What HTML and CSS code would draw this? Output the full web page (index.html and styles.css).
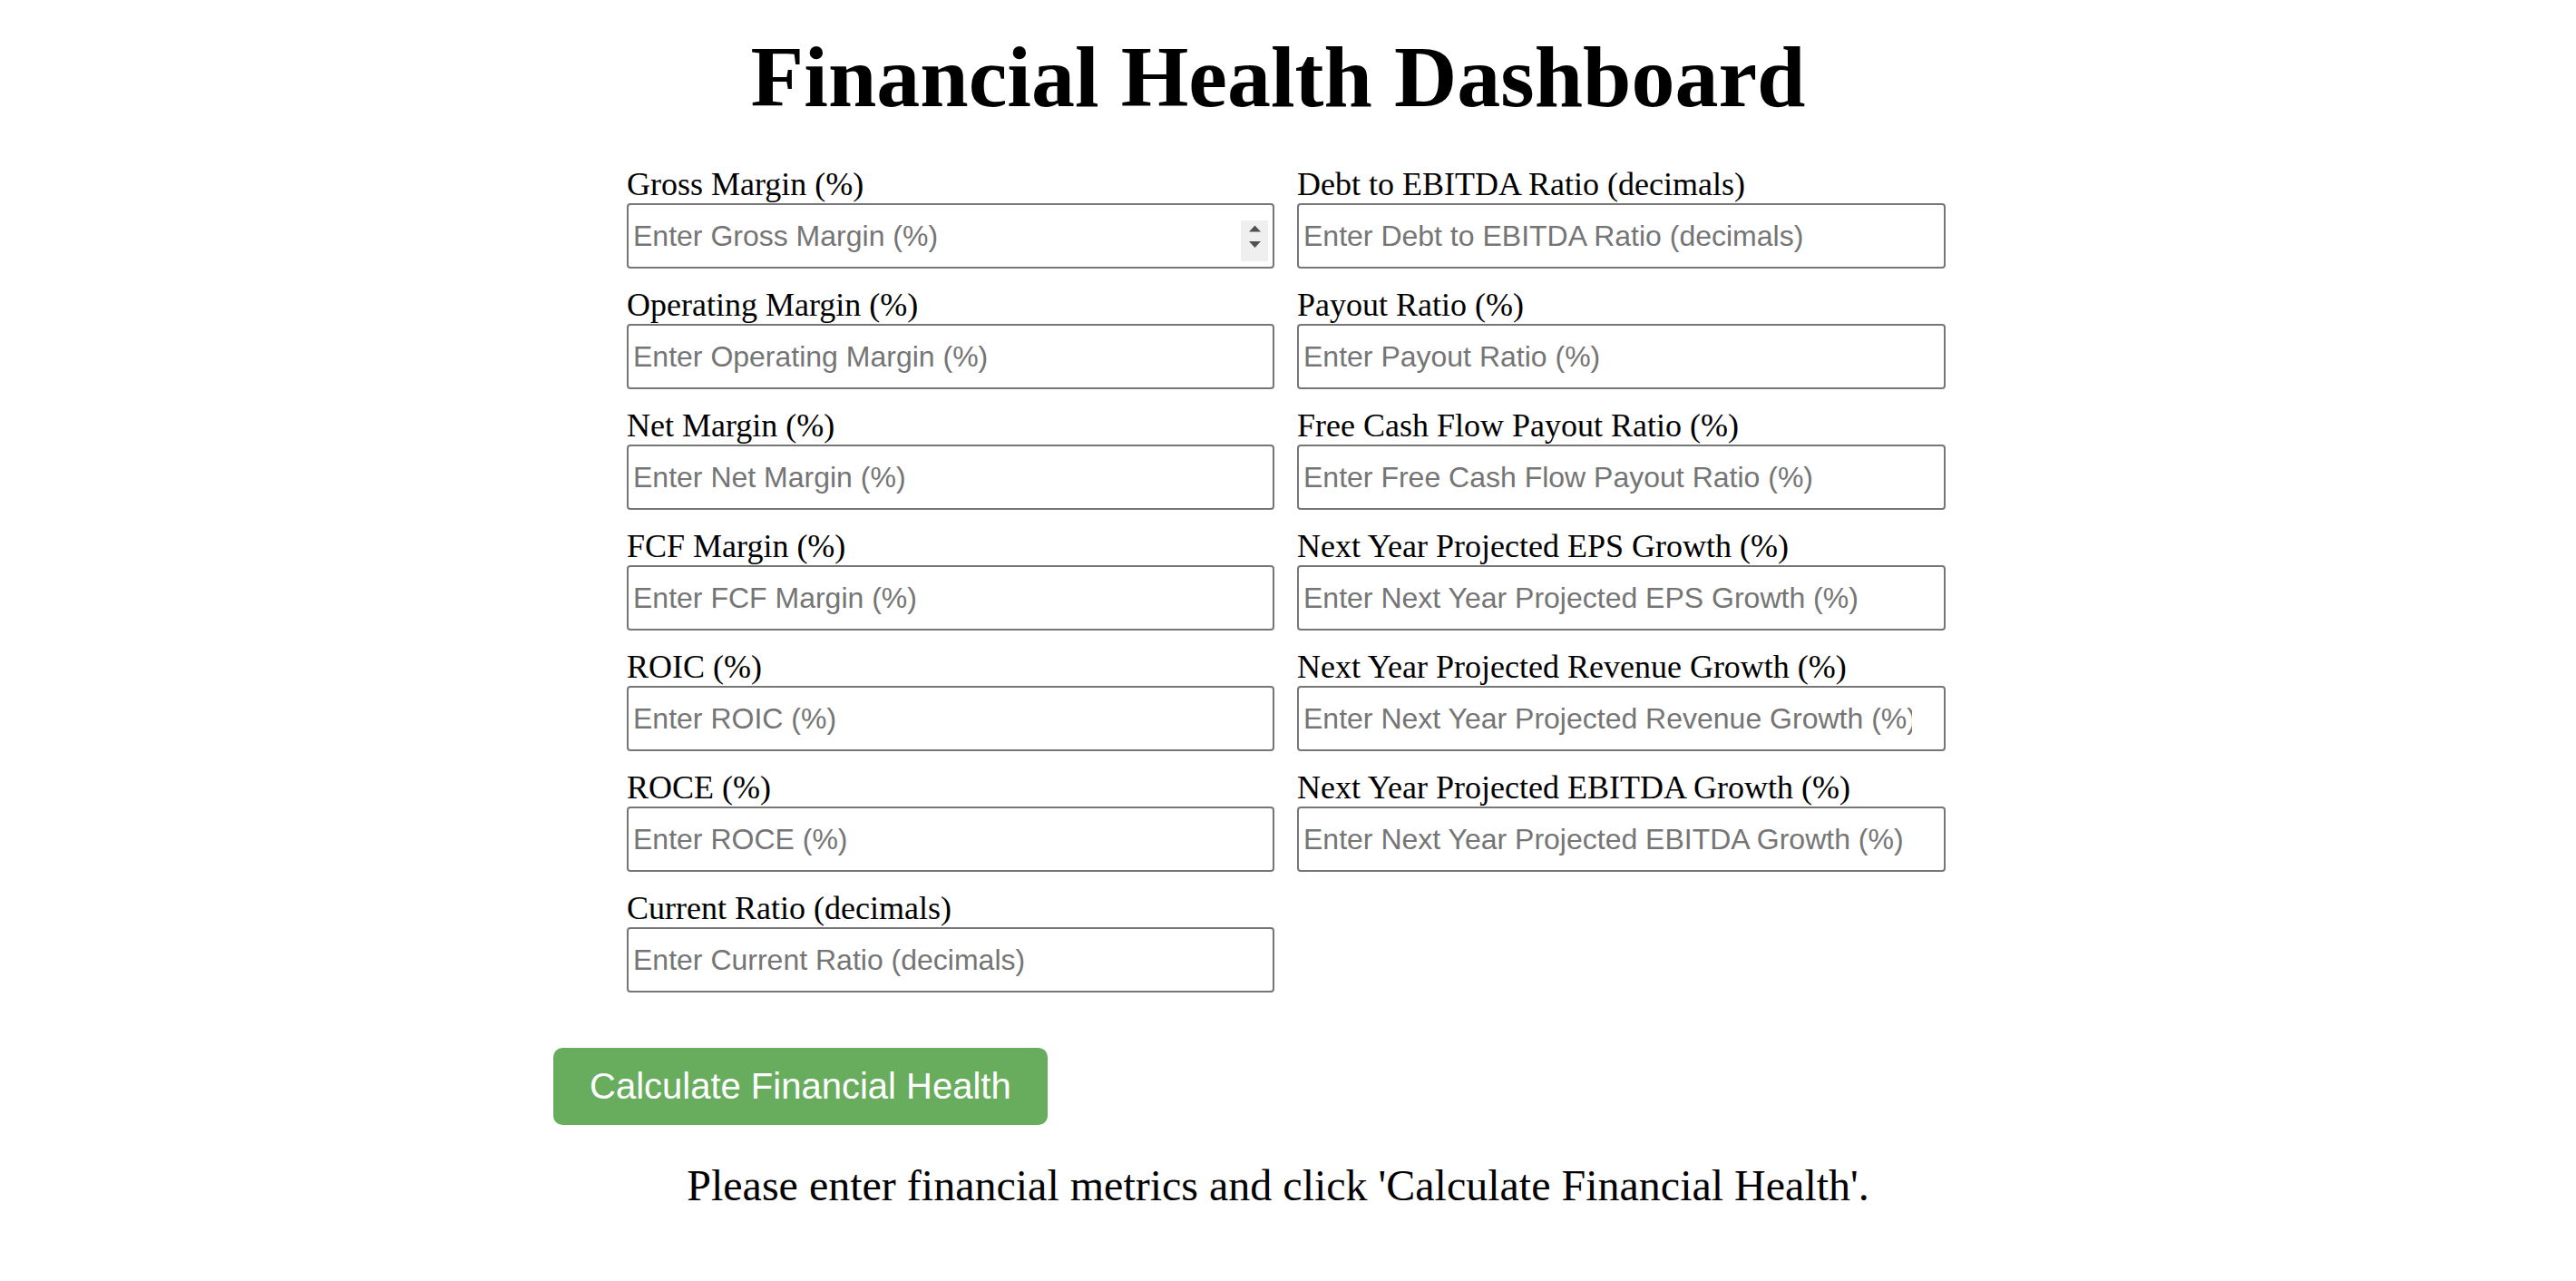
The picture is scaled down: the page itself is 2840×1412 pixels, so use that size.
FILE: index.html
```html
<!DOCTYPE html>
<html lang="en">
<head>
<meta charset="utf-8">
<title>Financial Health Dashboard</title>
<link rel="stylesheet" href="styles.css">
</head>
<body>
<div class="app">
  <h1 class="title">Financial Health Dashboard</h1>
  <form class="metrics">
    <div class="field">
      <label class="field-label" for="grossMargin">Gross Margin (%)</label>
      <div class="input-wrap">
        <input class="field-input" id="grossMargin" type="number" placeholder="Enter Gross Margin (%)">
        <span class="spin" aria-hidden="true"><svg width="30" height="45" viewBox="0 0 30 45"><polygon points="9,12.5 15.5,5.5 22,12.5" fill="#505050"/><polygon points="9,23 22,23 15.5,30" fill="#505050"/></svg></span>
      </div>
    </div>
    <div class="field">
      <label class="field-label" for="debtEbitda">Debt to EBITDA Ratio (decimals)</label>
      <input class="field-input" id="debtEbitda" type="number" placeholder="Enter Debt to EBITDA Ratio (decimals)">
    </div>
    <div class="field">
      <label class="field-label" for="operatingMargin">Operating Margin (%)</label>
      <input class="field-input" id="operatingMargin" type="number" placeholder="Enter Operating Margin (%)">
    </div>
    <div class="field">
      <label class="field-label" for="payoutRatio">Payout Ratio (%)</label>
      <input class="field-input" id="payoutRatio" type="number" placeholder="Enter Payout Ratio (%)">
    </div>
    <div class="field">
      <label class="field-label" for="netMargin">Net Margin (%)</label>
      <input class="field-input" id="netMargin" type="number" placeholder="Enter Net Margin (%)">
    </div>
    <div class="field">
      <label class="field-label" for="fcfPayout">Free Cash Flow Payout Ratio (%)</label>
      <input class="field-input" id="fcfPayout" type="number" placeholder="Enter Free Cash Flow Payout Ratio (%)">
    </div>
    <div class="field">
      <label class="field-label" for="fcfMargin">FCF Margin (%)</label>
      <input class="field-input" id="fcfMargin" type="number" placeholder="Enter FCF Margin (%)">
    </div>
    <div class="field">
      <label class="field-label" for="epsGrowth">Next Year Projected EPS Growth (%)</label>
      <input class="field-input" id="epsGrowth" type="number" placeholder="Enter Next Year Projected EPS Growth (%)">
    </div>
    <div class="field">
      <label class="field-label" for="roic">ROIC (%)</label>
      <input class="field-input" id="roic" type="number" placeholder="Enter ROIC (%)">
    </div>
    <div class="field">
      <label class="field-label" for="revenueGrowth">Next Year Projected Revenue Growth (%)</label>
      <input class="field-input" id="revenueGrowth" type="number" placeholder="Enter Next Year Projected Revenue Growth (%)">
    </div>
    <div class="field">
      <label class="field-label" for="roce">ROCE (%)</label>
      <input class="field-input" id="roce" type="number" placeholder="Enter ROCE (%)">
    </div>
    <div class="field">
      <label class="field-label" for="ebitdaGrowth">Next Year Projected EBITDA Growth (%)</label>
      <input class="field-input" id="ebitdaGrowth" type="number" placeholder="Enter Next Year Projected EBITDA Growth (%)">
    </div>
    <div class="field">
      <label class="field-label" for="currentRatio">Current Ratio (decimals)</label>
      <input class="field-input" id="currentRatio" type="number" placeholder="Enter Current Ratio (decimals)">
    </div>
  </form>
  <button class="calc-btn" type="button">Calculate Financial Health</button>
  <p class="status">Please enter financial metrics and click 'Calculate Financial Health'.</p>
</div>
</body>
</html>
```

FILE: styles.css
```css
html, body {
  background: #ffffff;
}

body {
  margin: 0;
  padding-right: 22px;
  font-family: "Liberation Serif", "Times New Roman", serif;
  color: #000000;
}

.app {
  width: 1598px;
  margin: 0 auto;
}

.title {
  font-size: 96px;
  font-weight: 700;
  line-height: 110px;
  margin: 30px 0 42px;
  text-align: center;
}

.metrics {
  display: grid;
  grid-template-columns: 714px 715px;
  column-gap: 25px;
  row-gap: 19px;
  width: 1454px;
  margin: 0 0 0 81px;
}

.field {
  display: flex;
  flex-direction: column;
}

.field-label {
  display: block;
  font-size: 36px;
  line-height: 42px;
}

.input-wrap {
  position: relative;
}

.field-input {
  display: block;
  width: 100%;
  height: 72px;
  box-sizing: border-box;
  margin: 0;
  padding: 0 35px 0 5px;
  border: 2px solid #767676;
  border-radius: 4px;
  background: #ffffff;
  color: #000000;
  font-family: "Liberation Sans", Arial, sans-serif;
  font-size: 32px;
  outline: none;
  -moz-appearance: textfield;
}

.field-input::placeholder {
  color: #757575;
  opacity: 1;
}

.field-input::-webkit-inner-spin-button,
.field-input::-webkit-outer-spin-button {
  -webkit-appearance: none;
  margin: 0;
}

.spin {
  position: absolute;
  top: 19px;
  right: 7px;
  width: 30px;
  height: 45px;
  background: #efefef;
  display: block;
}

.spin svg {
  display: block;
}

.calc-btn {
  display: block;
  margin: 61px 0 0 0;
  padding: 20px 40px;
  border: none;
  border-radius: 10px;
  background: #68ad5e;
  color: #ffffff;
  font-family: "Liberation Sans", Arial, sans-serif;
  font-size: 40px;
  line-height: 45px;
  cursor: pointer;
}

.status {
  margin: 39px 0 0;
  font-size: 48px;
  line-height: 55px;
  text-align: center;
}
```
